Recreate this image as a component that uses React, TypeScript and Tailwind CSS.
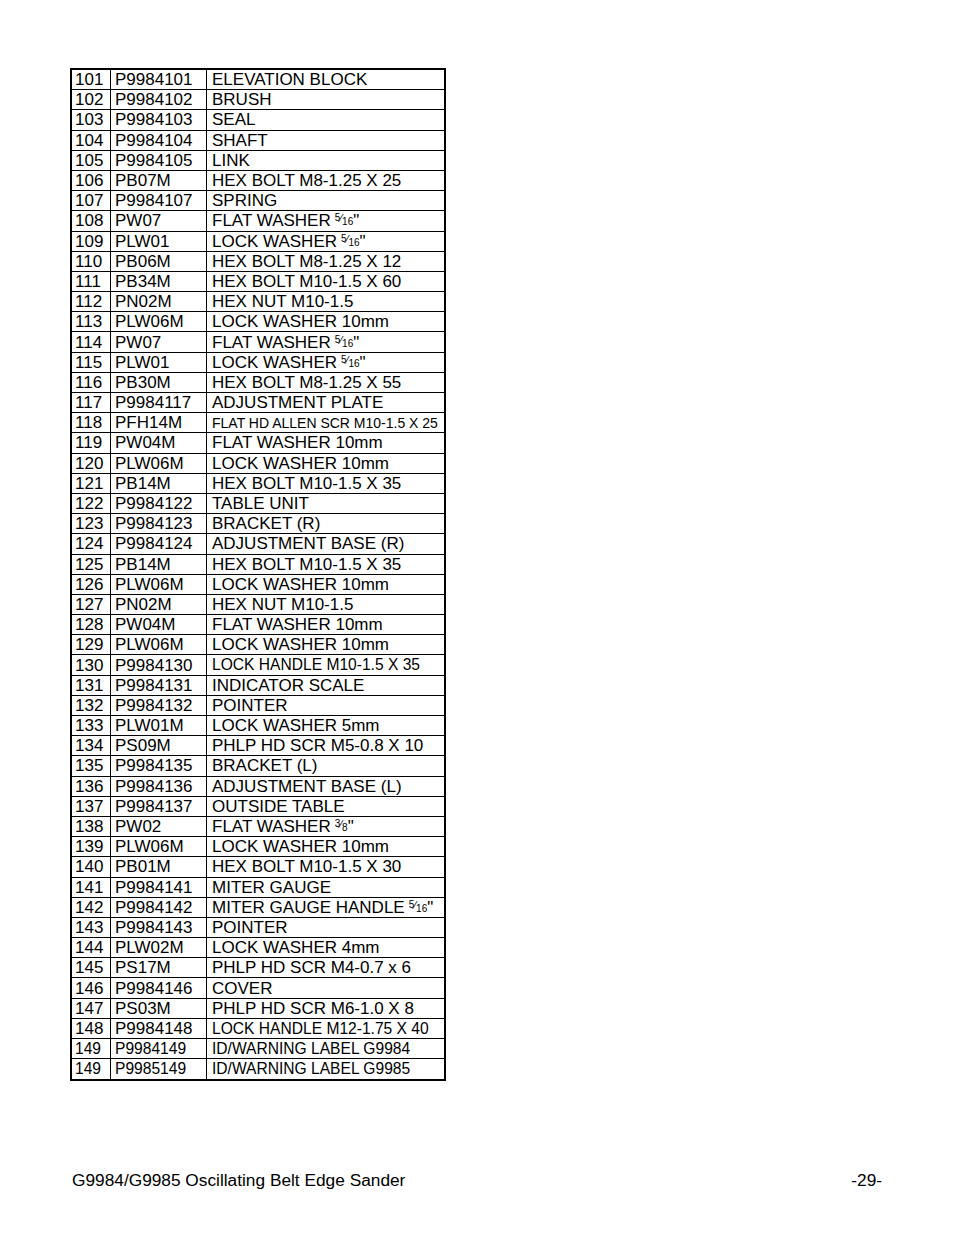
import React from 'react'

type Part = {
  ref: string
  code: string
  desc: string
  frac?: [string, string]
  descSize?: 'sm' | 'xs'
  small?: boolean
}

const parts: Part[] = [
  { ref: '101', code: 'P9984101', desc: 'ELEVATION BLOCK' },
  { ref: '102', code: 'P9984102', desc: 'BRUSH' },
  { ref: '103', code: 'P9984103', desc: 'SEAL' },
  { ref: '104', code: 'P9984104', desc: 'SHAFT' },
  { ref: '105', code: 'P9984105', desc: 'LINK' },
  { ref: '106', code: 'PB07M', desc: 'HEX BOLT M8-1.25 X 25' },
  { ref: '107', code: 'P9984107', desc: 'SPRING' },
  { ref: '108', code: 'PW07', desc: 'FLAT WASHER', frac: ['5', '16'] },
  { ref: '109', code: 'PLW01', desc: 'LOCK WASHER', frac: ['5', '16'] },
  { ref: '110', code: 'PB06M', desc: 'HEX BOLT M8-1.25 X 12' },
  { ref: '111', code: 'PB34M', desc: 'HEX BOLT M10-1.5 X 60' },
  { ref: '112', code: 'PN02M', desc: 'HEX NUT M10-1.5' },
  { ref: '113', code: 'PLW06M', desc: 'LOCK WASHER 10mm' },
  { ref: '114', code: 'PW07', desc: 'FLAT WASHER', frac: ['5', '16'] },
  { ref: '115', code: 'PLW01', desc: 'LOCK WASHER', frac: ['5', '16'] },
  { ref: '116', code: 'PB30M', desc: 'HEX BOLT M8-1.25 X 55' },
  { ref: '117', code: 'P9984117', desc: 'ADJUSTMENT PLATE' },
  { ref: '118', code: 'PFH14M', desc: 'FLAT HD ALLEN SCR M10-1.5 X 25', descSize: 'xs' },
  { ref: '119', code: 'PW04M', desc: 'FLAT WASHER 10mm' },
  { ref: '120', code: 'PLW06M', desc: 'LOCK WASHER 10mm' },
  { ref: '121', code: 'PB14M', desc: 'HEX BOLT M10-1.5 X 35' },
  { ref: '122', code: 'P9984122', desc: 'TABLE UNIT' },
  { ref: '123', code: 'P9984123', desc: 'BRACKET (R)' },
  { ref: '124', code: 'P9984124', desc: 'ADJUSTMENT BASE (R)' },
  { ref: '125', code: 'PB14M', desc: 'HEX BOLT M10-1.5 X 35' },
  { ref: '126', code: 'PLW06M', desc: 'LOCK WASHER 10mm' },
  { ref: '127', code: 'PN02M', desc: 'HEX NUT M10-1.5' },
  { ref: '128', code: 'PW04M', desc: 'FLAT WASHER 10mm' },
  { ref: '129', code: 'PLW06M', desc: 'LOCK WASHER 10mm' },
  { ref: '130', code: 'P9984130', desc: 'LOCK HANDLE M10-1.5 X 35', descSize: 'sm' },
  { ref: '131', code: 'P9984131', desc: 'INDICATOR SCALE' },
  { ref: '132', code: 'P9984132', desc: 'POINTER' },
  { ref: '133', code: 'PLW01M', desc: 'LOCK WASHER 5mm' },
  { ref: '134', code: 'PS09M', desc: 'PHLP HD SCR M5-0.8 X 10' },
  { ref: '135', code: 'P9984135', desc: 'BRACKET (L)' },
  { ref: '136', code: 'P9984136', desc: 'ADJUSTMENT BASE (L)' },
  { ref: '137', code: 'P9984137', desc: 'OUTSIDE TABLE' },
  { ref: '138', code: 'PW02', desc: 'FLAT WASHER', frac: ['3', '8'] },
  { ref: '139', code: 'PLW06M', desc: 'LOCK WASHER 10mm' },
  { ref: '140', code: 'PB01M', desc: 'HEX BOLT M10-1.5 X 30' },
  { ref: '141', code: 'P9984141', desc: 'MITER GAUGE' },
  { ref: '142', code: 'P9984142', desc: 'MITER GAUGE HANDLE', frac: ['5', '16'] },
  { ref: '143', code: 'P9984143', desc: 'POINTER' },
  { ref: '144', code: 'PLW02M', desc: 'LOCK WASHER 4mm' },
  { ref: '145', code: 'PS17M', desc: 'PHLP HD SCR M4-0.7 x 6' },
  { ref: '146', code: 'P9984146', desc: 'COVER' },
  { ref: '147', code: 'PS03M', desc: 'PHLP HD SCR M6-1.0 X 8' },
  { ref: '148', code: 'P9984148', desc: 'LOCK HANDLE M12-1.75 X 40', descSize: 'sm' },
  { ref: '149', code: 'P9984149', desc: 'ID/WARNING LABEL G9984', descSize: 'sm', small: true },
  { ref: '149', code: 'P9985149', desc: 'ID/WARNING LABEL G9985', descSize: 'sm', small: true },
]

// stacked-ish fraction like 5/16" as printed in the manual
function Fraction({ top, bottom }: { top: string; bottom: string }) {
  return (
    <span className="ml-[4px] inline-flex items-start">
      <span className="text-[10px] leading-none mt-[1px]">{top}</span>
      <span className="text-[11px] leading-none mt-[1px]">⁄</span>
      <span className="text-[10px] leading-none mt-[5px]">{bottom}</span>
      <span className="text-[17px] leading-none">"</span>
    </span>
  )
}

export default function App() {
  return (
    <div
      className="min-h-[1235px] w-[954px] bg-white text-black"
      style={{ fontFamily: '"Liberation Sans", Arial, sans-serif' }}
    >
      <div className="pt-[68px] pl-[70px]">
        <div className="w-[376px] border-2 border-black">
          {parts.map((p, i) => {
            const last = i === parts.length - 1
            const numSize = p.small ? 'text-[15.6px]' : 'text-[17px]'
            const descSize =
              p.descSize === 'xs' ? 'text-[14px]' : p.descSize === 'sm' ? 'text-[15.6px]' : 'text-[17px]'
            return (
              <div
                key={i}
                className={`flex h-[20.2px] leading-none ${last ? '' : 'border-b border-black'}`}
              >
                <div className={`flex w-[38px] items-center pl-[3px] ${numSize}`}>{p.ref}</div>
                <div className={`flex w-[96px] items-center border-l border-black pl-[4px] ${numSize}`}>
                  {p.code}
                </div>
                <div className={`flex flex-1 items-center whitespace-nowrap border-l border-black pl-[5px] ${descSize}`}>
                  {p.desc}
                  {p.frac && <Fraction top={p.frac[0]} bottom={p.frac[1]} />}
                </div>
              </div>
            )
          })}
        </div>
      </div>

      <div className="mt-[89px] flex h-[20px] items-center justify-between px-[72px] text-[17.3px] leading-none">
        <span>G9984/G9985 Oscillating Belt Edge Sander</span>
        <span>-29-</span>
      </div>
    </div>
  )
}
